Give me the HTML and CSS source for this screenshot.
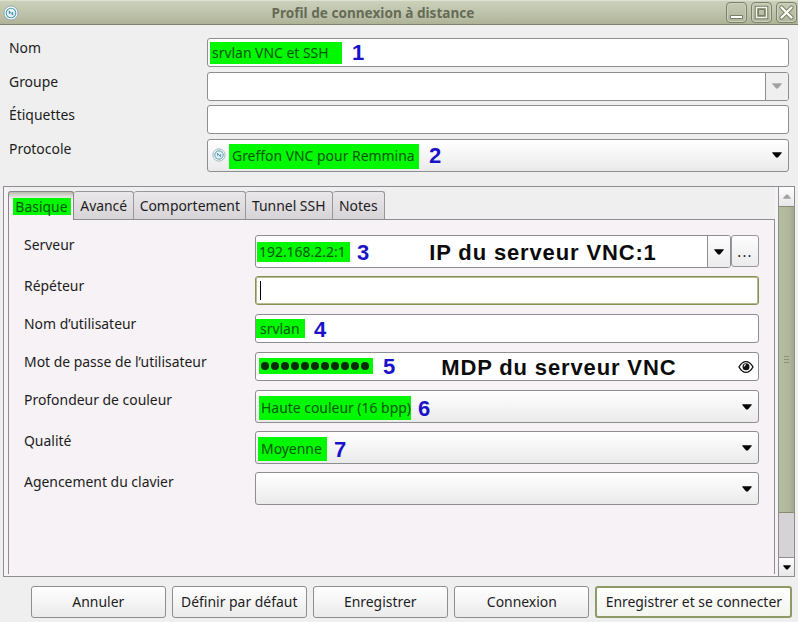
FILE: index.html
```html
<!DOCTYPE html>
<html lang="fr">
<head>
<meta charset="utf-8">
<title>Profil de connexion à distance</title>
<link rel="stylesheet" href="styles.css">
</head>
<body>
<svg class="defs" width="0" height="0">
  <symbol id="vnc" viewBox="0 0 16 16">
    <circle cx="8" cy="8" r="7" fill="#f4fafa" stroke="#8fa3ab" stroke-width=".9"/>
    <circle cx="8" cy="8" r="4.8" fill="#e4f3f6" stroke="#4f9cae" stroke-width="1.1"/>
    <path d="M6.2 5.8v3l1.5-1.4zM9.8 10.2v-3L8.3 8.6z" fill="#467f99" stroke="#467f99" stroke-width=".6"/>
  </symbol>
  <symbol id="down" viewBox="0 0 10 6"><path d="M.3.3h9.4v.8L5.9 5.4H4.1L.3 1.1z" fill="currentColor"/></symbol>
</svg>
<div class="window">
  <header class="titlebar">
    <svg class="app-icon"><use href="#vnc"/></svg>
    <h1 class="title">Profil de connexion à distance</h1>
    <div class="controls">
      <span class="control"><svg viewBox="0 0 21 21"><path d="M4.5 13.5h12v3h-12z" fill="#fff" stroke="#777d67"/></svg></span>
      <span class="control"><svg viewBox="0 0 21 21"><path d="M5.5 5.5h10v10h-10z" fill="none" stroke="#777d67" stroke-width="3.6"/><path d="M5.5 5.5h10v10h-10z" fill="none" stroke="#f3f5e9" stroke-width="1.5"/><path d="M7.5 7.5h6v6h-6z" fill="none" stroke="#777d67"/></svg></span>
      <span class="control"><svg viewBox="0 0 21 21"><path d="M5.500 5.500l10 10m0-10l-10 10" fill="none" stroke="#777d67" stroke-width="4.2" stroke-linecap="round"/><path d="M5.500 5.500l10 10m0-10l-10 10" fill="none" stroke="#fcfdf5" stroke-width="2.4" stroke-linecap="round"/></svg></span>
    </div>
  </header>

  <section class="profile">
    <div class="row"><span class="label"><span class="text">Nom</span></span><div class="field name"><span class="mark"><span class="text">srvlan VNC et SSH</span></span><b class="step">1</b></div></div>
    <div class="row"><span class="label"><span class="text">Groupe</span></span><div class="field group"><span class="drop disabled"><svg class="arrow"><use href="#down"/></svg></span></div></div>
    <div class="row"><span class="label"><span class="text">Étiquettes</span></span><div class="field"></div></div>
    <div class="row"><span class="label"><span class="text">Protocole</span></span><div class="field select protocol"><svg class="plugin"><use href="#vnc"/></svg><span class="mark"><span class="text">Greffon VNC pour Remmina</span></span><b class="step">2</b><svg class="arrow"><use href="#down"/></svg></div></div>
  </section>

  <section class="panel">
    <div class="notebook">
      <nav class="tabs">
        <span class="tab active t1"><span class="mark"><span class="text">Basique</span></span></span><span class="tab t2"><span class="text">Avancé</span></span><span class="tab t3"><span class="text">Comportement</span></span><span class="tab t4"><span class="text">Tunnel SSH</span></span><span class="tab t5"><span class="text">Notes</span></span>
      </nav>
      <div class="page">
        <div class="row server"><span class="label"><span class="text">Serveur</span></span><div class="field tall"><span class="mark"><span class="text">192.168.2.2:1</span></span><b class="step">3</b><b class="note">IP du serveur VNC:1</b><span class="drop"><svg class="arrow"><use href="#down"/></svg></span></div><span class="more">...</span></div>
        <div class="row repeater"><span class="label"><span class="text">Répéteur</span></span><div class="field focused"><i class="caret"></i></div></div>
        <div class="row user"><span class="label"><span class="text">Nom d’utilisateur</span></span><div class="field"><span class="mark"><span class="text">srvlan</span></span><b class="step">4</b></div></div>
        <div class="row password"><span class="label"><span class="text">Mot de passe de l’utilisateur</span></span><div class="field"><span class="mark dots"><i></i><i></i><i></i><i></i><i></i><i></i><i></i><i></i><i></i><i></i><i></i></span><b class="step">5</b><b class="note">MDP du serveur VNC</b>
          <svg class="eye" viewBox="0 0 16 14"><path d="M1 7c2-3.600 4.300-5.400 7-5.400S13 3.400 15 7c-2 3.600-4.300 5.400-7 5.400S3 10.600 1 7z" fill="#fff" stroke="#111" stroke-width="1.400"/><circle cx="8" cy="6.800" r="3.500" fill="#111"/><path d="M8 4.500a2 2 0 0 0-1.800 2" fill="none" stroke="#fff" stroke-width="1.100"/></svg></div></div>
        <div class="row color"><span class="label"><span class="text">Profondeur de couleur</span></span><div class="field select"><span class="mark"><span class="text">Haute couleur (16 bpp)</span></span><b class="step">6</b><svg class="arrow"><use href="#down"/></svg></div></div>
        <div class="row quality"><span class="label"><span class="text">Qualité</span></span><div class="field select"><span class="mark"><span class="text">Moyenne</span></span><b class="step">7</b><svg class="arrow"><use href="#down"/></svg></div></div>
        <div class="row"><span class="label"><span class="text">Agencement du clavier</span></span><div class="field select"><svg class="arrow"><use href="#down"/></svg></div></div>
      </div>
    </div>
    <div class="scrollbar">
      <span class="scroll-button up"><svg class="arrow"><use href="#down"/></svg></span>
      <span class="thumb"><i></i><i></i><i></i></span>
      <span class="trough"></span>
      <span class="scroll-button"><svg class="arrow"><use href="#down"/></svg></span>
    </div>
  </section>

  <footer class="actions">
    <span class="button"><span class="text">Annuler</span></span><span class="button"><span class="text">Définir par défaut</span></span><span class="button"><span class="text">Enregistrer</span></span><span class="button"><span class="text">Connexion</span></span><span class="button default"><span class="text">Enregistrer et se connecter</span></span>
  </footer>
</div>
</body>
</html>
```
FILE: styles.css
```css
* { box-sizing: border-box; }
body { margin: 0; background: #eee; color: #1c1c1c; font: 14.67px/18px "Noto Sans", sans-serif; white-space: nowrap; }
.defs { display: block; }
.window { width: 798px; height: 622px; display: flex; flex-direction: column; background: #efefef; overflow: hidden; }
svg { flex: none; display: block; }
.text { display: inline-block; transform: scaleX(.95); }
.label .text, .mark .text { transform-origin: 0 50%; }
.active .mark .text { transform-origin: 50% 50%; }

.titlebar { height: 25px; flex: none; display: grid; grid-template-columns: 22px 1fr 74px; align-items: center; border-top: 1px solid #dde2d0; border-bottom: 1px solid #7d826e; background: linear-gradient(#cbd0ba, #bdc2aa 55%, #aeb398); }
.app-icon { width: 16px; height: 16px; margin-left: 3px; }
.title { margin: 0; text-align: center; font: 700 13.6px/20px "Noto Sans", sans-serif; color: #666b56; }
.controls { display: flex; gap: 4px; justify-content: flex-end; padding-right: 1px; }
.control { width: 21px; height: 21px; border: 1px solid #7b826b; border-radius: 4px; background: linear-gradient(#c5cbb4, #afb49a); box-shadow: inset 0 0 0 1px #ccd1bd; }
.control svg { width: 21px; height: 21px; margin: -1px; }

.profile { flex: none; height: 161px; padding: 13px 9px 0; display: grid; grid-template-rows: 29px 29px 29px 33px; row-gap: 4.5px; }
.row { display: flex; align-items: stretch; }
.label { flex: none; width: 198px; height: 20px; }
.field { flex: 1; height: 29px; display: flex; align-items: center; border: 1px solid #8e8e92; border-radius: 3px; background: #fff; min-width: 0; }
.select { height: 33px; background: linear-gradient(#fff, #f6f5f6 50%, #ebeaeb); padding-right: 6px; }
.tall { height: 33px; }
.mark { flex: none; background: #00f800; color: #07560a; display: flex; align-items: center; padding-bottom: 2px; }
.step { flex: none; color: #1a12c8; font: 700 22px/22px "Liberation Sans", Arial, sans-serif; }
.note { flex: none; color: #0c0c0c; font: 700 22px/22px "Liberation Sans", Arial, sans-serif; letter-spacing: .86px; }
.arrow { width: 10px; height: 6px; color: #050505; }
.select .arrow { margin-left: auto; }
.drop { align-self: stretch; width: 23px; margin-left: auto; flex: none; display: flex; align-items: center; justify-content: center; border-left: 1px solid #8e8e92; border-radius: 0 2px 2px 0; background: linear-gradient(#fdfdfd, #ebebeb); }
.drop.disabled { background: #efefef; }
.disabled .arrow, .up .arrow { color: #a2a2a2; }

.name .mark { width: 132px; height: 22px; margin-left: 2px; padding-left: 2px; }
.name .step { margin-left: 10px; }
.plugin { width: 14px; height: 14px; margin: 0 3px 0 4px; }
.protocol .mark { width: 190px; height: 25px; padding-left: 3px; margin-top: 2px; }
.protocol .step { margin: 1px 0 0 10px; }

.panel { flex: none; width: 792px; height: 391px; margin-left: 3px; border: 1px solid #8e8e92; background: #f6f2f6; display: flex; justify-content: space-between; }
.notebook { width: 767px; height: 387px; margin-left: 4px; display: flex; flex-direction: column; }
.tabs { flex: none; height: 33px; margin: 0 0 -1px; padding-top: 4px; display: flex; background: #efefef; border-bottom: 1px solid #8e8e92; }
.tab { height: 28px; padding-bottom: 1px; display: flex; align-items: center; justify-content: center; border: 1px solid #98969a; border-width: 1px 1px 0 0; border-radius: 3px 3px 0 0; background: linear-gradient(#e9e7e9, #d6d4d6); }
.tab.active { height: 29px; border-color: #858884; border-left-width: 1px; background: linear-gradient(#b9bdac, #f6f2f6 7px); }
.active .mark { width: 58px; height: 17px; justify-content: center; margin: 2px 0 0 1px; }
.t1 { width: 66px; }
.t2 { width: 60px; }
.t3 { width: 112px; }
.t4 { width: 87px; }
.t5 { width: 52px; }
.page { flex: 1; padding: 16px 15px 0; border: 1px solid #8e8e92; border-width: 0 1px; display: flex; flex-direction: column; }
.page .row { margin-bottom: 9px; }
.page .row.server, .page .row.color, .page .row.quality { margin-bottom: 8px; }
.page .label { width: 231px; }
.server .field { border-radius: 3px; }
.server .mark { width: 93px; height: 20px; margin-left: 1px; padding-left: 2px; }
.server .step { margin: 2px 0 0 7px; }
.server .note { margin-left: 60px; margin-top: 3px; }
.more { width: 28px; height: 32px; flex: none; text-align: center; line-height: 31px; letter-spacing: 1.2px; border: 1px solid #98969a; border-radius: 3px; background: linear-gradient(#fdfdfd, #ebebeb); }
.field.focused { border: 1px solid #869254; box-shadow: inset 0 0 0 1px #b4bf91; }
.caret { width: 1px; height: 19px; margin-left: 4px; background: #000; }
.user .mark { width: 49px; height: 19px; padding-left: 4px; }
.user .step { margin: 3px 0 0 9px; }
.password .mark { width: 114px; height: 16px; margin: -1px 0 0 3px; padding: 0 0 0 2px; gap: 2px; }
.dots i { width: 8px; height: 8px; border-radius: 50%; background: #062b07; }
.password .step { margin-left: 10px; }
.password .note { margin: 2px 0 0 46px; }
.eye { width: 16px; height: 14px; margin: 0 4px 0 auto; }
.color .mark { width: 152px; height: 24px; margin: 2px 0 0 3px; padding-left: 2px; }
.color .step, .quality .step { margin: 4px 0 0 7px; }
.quality .mark { width: 69px; height: 24px; margin: 2px 0 0 2px; padding-left: 3px; }

.scrollbar { width: 16px; border-left: 1px solid #8e8e92; display: flex; flex-direction: column; }
.scroll-button { height: 18px; display: flex; align-items: center; justify-content: center; background: linear-gradient(#fdfdfd, #e7e7e7); }
.scroll-button .arrow { width: 8px; height: 5px; }
.scroll-button.up { height: 19px; }
.up .arrow { transform: scaleY(-1); }
.thumb { height: 307px; border: 1px solid #858c73; border-width: 1px 0; background: linear-gradient(90deg, #b5bda0, #b0b79b 65%, #a0a78b); display: flex; flex-direction: column; gap: 2px; align-items: center; justify-content: center; }
.thumb i { width: 5px; height: 1px; background: #89917a; }
.trough { flex: 1; background: #d5d3d5; border-bottom: 1px solid #8e8e92; }

.actions { padding: 9px 0 0 31px; display: flex; gap: 6px; }
.button { width: 135px; height: 32px; padding-bottom: 2px; display: flex; align-items: center; justify-content: center; border: 1px solid #8e8e92; border-radius: 3px; background: linear-gradient(#fff, #f6f5f6 50%, #ebeaeb); }
.button.default { width: 197px; border: 2px solid #8d9a63; background: linear-gradient(#fff, #f3f3ef); }
```
